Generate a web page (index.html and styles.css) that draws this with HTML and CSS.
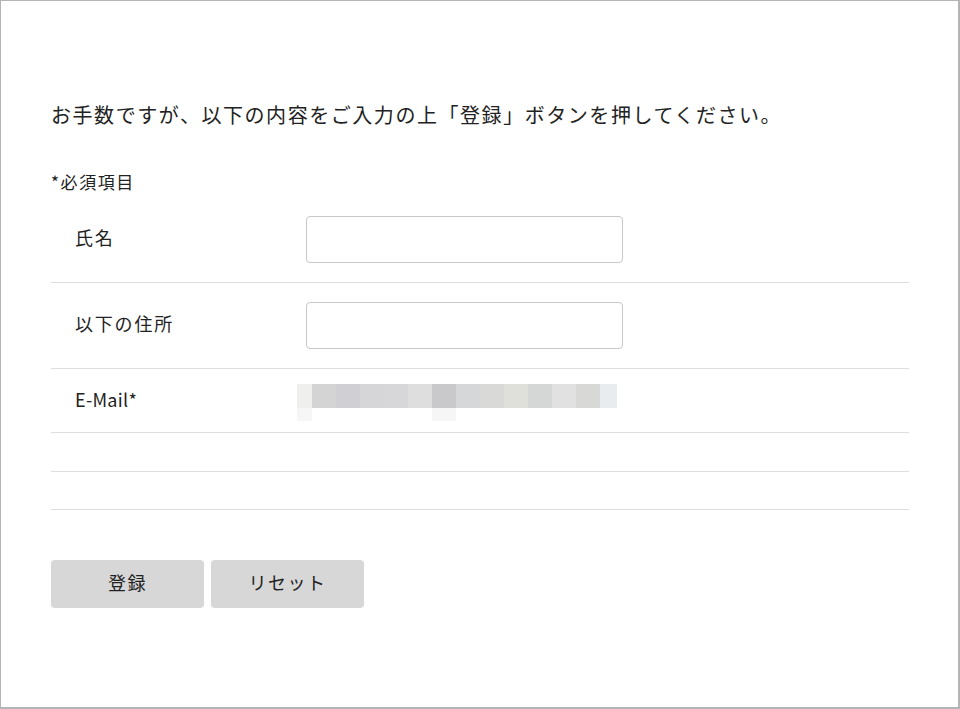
FILE: index.html
```html
<!DOCTYPE html>
<html lang="ja">
<head>
<meta charset="utf-8">
<title>登録フォーム</title>
<link rel="stylesheet" href="styles.css">
</head>
<body>
<div class="frame">
  <div class="content">
    <p class="intro">お手数ですが、以下の内容をご入力の上「登録」ボタンを押してください。</p>
    <p class="required">*必須項目</p>
    <div class="rows">
      <div class="row">
        <div class="label">氏名</div>
        <div class="field"><input class="text-input" type="text"></div>
      </div>
      <div class="row">
        <div class="label">以下の住所</div>
        <div class="field"><input class="text-input" type="text"></div>
      </div>
      <div class="row row-email">
        <div class="label">E-Mail*</div>
        <div class="field field-blur"><div class="blur"></div><div class="blur-low"></div></div>
      </div>
      <div class="row row-empty row-empty-first"></div>
      <div class="row row-empty"></div>
    </div>
    <div class="buttons">
      <button class="btn" type="button">登録</button>
      <button class="btn" type="button">リセット</button>
    </div>
  </div>
</div>
</body>
</html>
```
FILE: styles.css
```css
html, body {
  margin: 0;
  padding: 0;
  background: #ffffff;
}
body {
  font-family: "Noto Sans CJK JP", "Noto Sans", sans-serif;
  color: #222222;
}
.frame {
  width: 960px;
  height: 709px;
  box-sizing: border-box;
  border: 2px solid #b4b4b4;
  border-top-width: 1px;
  border-left-width: 1px;
  background: #fff;
}
.content {
  padding: 99px 0 0 50px;
  width: 858px;
}
.intro {
  margin: 0;
  font-size: 20px;
  line-height: 30px;
  letter-spacing: 1.55px;
}
.required {
  margin: 40px 0 3px;
  font-size: 17px;
  line-height: 24px;
  letter-spacing: 1.6px;
}
.row {
  display: grid;
  grid-template-columns: 255px 1fr;
  align-items: center;
  padding: 19px 0;
  border-bottom: 1px solid #dedede;
}
.label {
  padding-left: 24px;
  font-size: 18px;
  letter-spacing: 1.8px;
  line-height: 24px;
  margin-top: -6px;
}
.text-input {
  display: block;
  width: 317px;
  height: 47px;
  box-sizing: border-box;
  border: 1px solid #c8c8c8;
  border-radius: 4px;
  background: #fff;
  margin: 0;
  padding: 0 10px;
}
.row-email {
  padding: 15px 0 11px;
}
.row-email .label {
  letter-spacing: 0.3px;
  margin-top: -8px;
}
.field-blur {
  margin-left: -9px;
}
.blur {
  width: 320px;
  height: 24px;
  background: linear-gradient(to right,
    #efefed 0 15px, #d4d4d4 15px 39px, #d0d0d4 39px 63px, #d6d6d8 63px 87px,
    #d7d7da 87px 111px, #dedede 111px 135px, #c9c9cb 135px 159px, #d6d7d9 159px 183px,
    #d9d9d7 183px 207px, #dfe0da 207px 231px, #d5d7d6 231px 255px, #e1e1e1 255px 279px,
    #d8d8d6 279px 303px, #e8ecef 303px 320px);
}
.blur-low {
  width: 159px;
  height: 13px;
  background: linear-gradient(to right,
    #f6f6f6 0 15px, transparent 15px 135px, #f6f6f6 135px 159px);
}
.row-empty {
  display: block;
  padding: 0;
  height: 37px;
}
.row-empty-first {
  height: 38px;
}
.buttons {
  display: flex;
  gap: 7px;
  margin-top: 50px;
}
.btn {
  width: 153px;
  height: 48px;
  border: none;
  border-radius: 4px;
  background: #d7d7d7;
  font-family: "Noto Sans CJK JP", "Noto Sans", sans-serif;
  font-size: 18px;
  letter-spacing: 1.5px;
  color: #222;
  padding: 0 0 4px;
}
```
